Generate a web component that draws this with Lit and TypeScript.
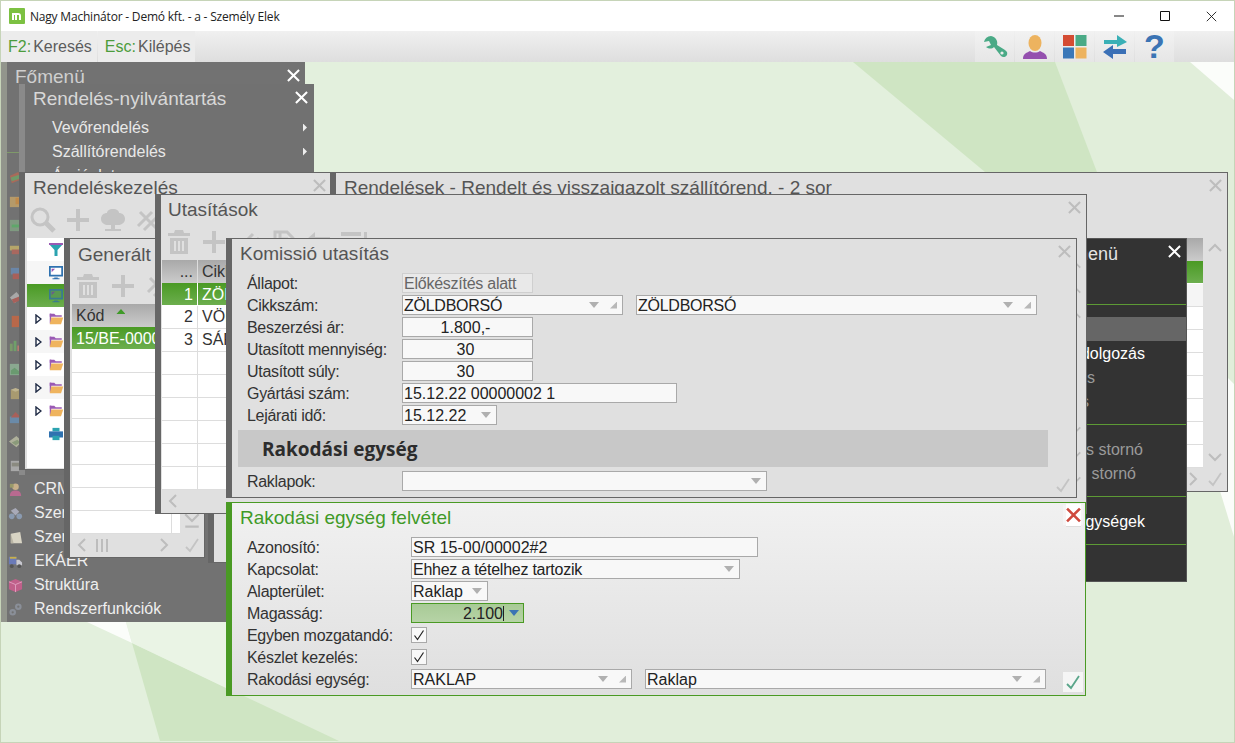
import { LitElement, html, svg, css, nothing } from "lit";
import { customElement } from "lit/decorators.js";

const x = (c = "", s = 13) => html`<svg class="x ${c}" width=${s} height=${s} viewBox="0 0 14 14"><path d="M1 1L13 13M13 1L1 13"/></svg>`;
const g = "#c4c4c4";
const trash = html`<svg width="26" height="26" viewBox="0 0 26 26" fill=${g}><path d="M9 1h8l1 3h6v3H2V4h6z"/><path fill-rule="evenodd" d="M4 9h18v16H4zM8 12v10h2V12zM12 12v10h2V12zM16 12v10h2V12z"/></svg>`;
const plus = html`<svg width="24" height="24" viewBox="0 0 24 24" fill=${g}><path d="M10 1h4v9h9v4h-9v9h-4v-9H1v-4h9z"/></svg>`;
const mag = html`<svg width="26" height="26" viewBox="0 0 26 26" fill="none" stroke=${g}><circle cx="10" cy="10" r="8" stroke-width="3"/><path d="M16 16l8 8" stroke-width="5"/></svg>`;
const tree = html`<svg width="26" height="26" viewBox="0 0 26 26" fill=${g}><path d="M13 2c4 0 6 2 6 4 3 0 6 2 6 6s-4 6-7 6h-3v4h6v2H5v-2h6v-4H8c-3 0-7-2-7-6s3-6 6-6c0-2 2-4 6-4z"/></svg>`;
const slash = html`<svg width="26" height="26" viewBox="0 0 26 26" fill="none" stroke=${g} stroke-width="3"><path d="M3 19L17 5M9 23L23 9M5 5l16 16" /></svg>`;
const dbl = html`<svg width="26" height="26" viewBox="0 0 26 26" fill="none" stroke=${g} stroke-width="3"><path d="M3 19L17 5M9 23L23 9"/></svg>`;
const doc = html`<svg width="26" height="26" viewBox="0 0 26 26" fill="none" stroke=${g} stroke-width="3"><path d="M4 3h12l6 6v14H4zM9 3v7h8"/></svg>`;
const back = html`<svg width="26" height="26" viewBox="0 0 26 26" fill=${g}><path d="M9 3v5h15v4H9v5L1 10z"/></svg>`;
const lines = html`<svg width="28" height="26" viewBox="0 0 28 26" fill=${g}><path d="M1 3h20v4H1zM1 10h20v4H1zM24 3h3v11h-3z"/></svg>`;

const chev = (d: string, s = 16) => {
  const p: Record<string, string> = { u: "M2 11L8 5L14 11", d: "M2 5L8 11L14 5", l: "M11 2L5 8L11 14", r: "M5 2L11 8L5 14", e: "M2 2L8 8L14 2M2 13H14" };
  return html`<svg width=${s} height=${s} viewBox="0 0 16 16" fill="none" stroke="#bdbdbd" stroke-width="2"><path d=${p[d]}/></svg>`;
};
const okc = (c = "#c4c4c4") => html`<svg width="16" height="16" viewBox="0 0 16 16" fill="none" stroke=${c} stroke-width="1.8"><path d="M2 10L6 14L14 2"/></svg>`;

const menuIcons = [
  svg`<path d="M2 6l9-4 3 8-10 4z" fill="#a86a5a"/><path d="M3 8l9-3 1 4-9 3z" fill="#6f9a6a"/>`,
  svg`<path d="M2 3h10v11H2z" fill="#b59a6a"/><path d="M8 4h6v7H8z" fill="#c08a4a"/>`,
  svg`<path d="M2 2h12v12H2z" fill="#7f9a80"/><path d="M4 7h9v3H4z" fill="#5fa76a"/>`,
  svg`<path d="M2 4h12v5H2z" fill="#b5a66a"/><path d="M4 8h10v5H4z" fill="#a8685f"/>`,
  svg`<path d="M3 2h9v7H3z" fill="#6a86a8"/><path d="M5 8h9v6H5z" fill="#a8605a"/>`,
  svg`<path d="M2 8l7-6 5 6-7 6z" fill="#a8a8a8"/><path d="M4 10l8-3 1 4-7 3z" fill="#a8605a"/>`,
  svg`<path d="M4 2h8v12H4z" fill="#b8684a"/>`,
  svg`<path d="M2 6h3v8H2z" fill="#7a9a6a"/><path d="M6 3h3v11H6z" fill="#6fa06a"/><path d="M10 8h3v6h-3z" fill="#b87a70"/>`,
  svg`<path d="M2 2h12v12H2z" fill="#8aa890"/><path d="M3 9l4-3 6 5v2H3z" fill="#6a9a70"/>`,
  svg`<path d="M3 4h10v10H3z" fill="#a89a70"/><path d="M3 4l5-2 5 2-5 2z" fill="#bfb48f"/>`,
  svg`<path d="M2 7h12v7H2z" fill="#6a8aa8"/><path d="M3 8l5-6 6 6z" fill="#a8605a"/>`,
  svg`<path d="M1 8l8-6 6 6-6 6z" fill="#aeb09a"/><path d="M4 9l6-3 3 3-5 3z" fill="#8a9a7a"/>`,
  svg`<path d="M3 3h10v11H3z" fill="#a8a8a8"/><path d="M4 5h8v4H4z" fill="#8a8a80"/>`,
  svg`<circle cx="8" cy="5" r="3.5" fill="#c8b08a"/><path d="M2 15c0-5 3-6 6-6s6 1 6 6z" fill="#b86a90"/><path d="M2 2h4v4H2z" fill="#9a9a6a"/>`,
  svg`<circle cx="4" cy="11" r="3" fill="#8a9ab0"/><circle cx="12" cy="11" r="3" fill="#8a9ab0"/><path d="M3 5l5-3 4 4-4 4z" fill="#a8aab8"/>`,
  svg`<path d="M3 4l10-2 2 12H3z" fill="#d8d4c4"/><path d="M3 4l3 10H3z" fill="#b8b4a4"/>`,
  svg`<path d="M1 3h8v8H1z" fill="#6a7ab8"/><path d="M9 6h3l3 3v3H9z" fill="#c8c8d0"/><circle cx="4" cy="13" r="2" fill="#555"/><circle cx="12" cy="13" r="2" fill="#555"/><path d="M2 3h7v2H2z" fill="#c8b04a"/>`,
  svg`<path d="M8 1l7 3v8l-7 3-7-3V4z" fill="#c0608a"/><path d="M8 7v8M1 4l7 3 7-3" stroke="#e0a0c0" fill="none"/>`,
  svg`<circle cx="5" cy="11" r="3.5" fill="#8a8f98"/><circle cx="11" cy="5" r="3.5" fill="#8a8f98"/><circle cx="5" cy="11" r="1.2" fill="#727272"/><circle cx="11" cy="5" r="1.2" fill="#727272"/>`,
];
const menuLabels = ["", "", "", "", "", "", "", "", "", "", "", "", "", "CRM", "Szerviz", "Szerződés", "EKÁER", "Struktúra", "Rendszerfunkciók"];

const inp = (t: string, cls = "", arrow = false, corner = false) => html`<div class="inp ${cls}"><span class="v">${t}</span>${arrow ? html`<i class="arr ${corner ? "mr" : ""}"></i>` : nothing}${corner ? html`<i class="cor"></i>` : nothing}</div>`;
const row = (l: string, c: unknown) => html`<div class="row"><span class="lbl">${l}</span>${c}</div>`;
const cb = html`<div class="cb"><svg width="12" height="12" viewBox="0 0 12 12" fill="none" stroke="#222" stroke-width="1.2"><path d="M1.5 6.5L4.5 10.5L10.5 1.5"/></svg></div>`;

@customElement("app-root")
export class AppRoot extends LitElement {
  static styles = css`
    :host { display: block; width: 1235px; height: 743px; font-family: "Liberation Sans", Arial, sans-serif; }
    .app { width: 1235px; height: 743px; box-sizing: border-box; border: 1px solid #c6d4b8; display: flex; flex-direction: column; background: #fff; overflow: hidden; }
    .tb { height: 30px; display: flex; align-items: center; padding-left: 8px; font: 12px "Open Sans", sans-serif; color: #222; flex: none; }
    .tb .t { margin-left: 5px; letter-spacing: -0.2px; }
    .wc { margin-left: auto; display: flex; }
    .wc div { width: 46px; height: 30px; display: flex; align-items: center; justify-content: center; }
    .bar { height: 31px; flex: none; display: flex; background: linear-gradient(#f0f0f0, #dedede); font-size: 16px; color: #5c5c5c; }
    .tab { display: flex; align-items: center; padding: 0 5px 0 7px; background: #ececec; }
    .tab + .tab { margin-left: 1px; }
    .tab b { font-weight: 400; color: #4c9c3c; margin-right: 2px; }
    .ibs { margin-left: auto; margin-right: 60px; display: flex; }
    .ib { width: 39px; margin-left: 1px; background: linear-gradient(#f2f2f2, #e6e6e6); display: flex; align-items: center; justify-content: center; }
    .q { font: 700 34px "Liberation Sans", sans-serif; color: #3b74b4; line-height: 31px; }
    .desk { flex: 1; position: relative; overflow: hidden; background: #e3f0dd; }
    .bg { position: absolute; inset: 0; width: 100%; height: 100%; }

    .win { position: absolute; box-sizing: border-box; display: flex; flex-direction: column; background: #e0e0e0; border: 1px solid #666; border-left-width: 6px; overflow: hidden; color: #333; }
    .title { height: 31px; flex: none; font-size: 19px; line-height: 29px; padding-left: 8px; color: #555; white-space: nowrap; }
    .cl { position: absolute; top: 2px; right: 2px; width: 20px; height: 20px; display: flex; align-items: center; justify-content: center; }
    .x { fill: none; stroke: #bdbdbd; stroke-width: 2.2; }
    .x.w { stroke: #fff; stroke-width: 2.2; }
    .x.r { stroke: #cf4a3e; stroke-width: 2.4; }
    .x.k { stroke: #111; stroke-width: 1.1; }
    .tools { height: 34px; flex: none; display: flex; align-items: center; padding-bottom: 3px; box-sizing: border-box; }
    .tools > div { width: 35px; flex: none; display: flex; justify-content: center; }

    .fo { left: 0; top: 0; width: 304px; height: 560px; background: #727272; border: 0; border-left: 6px solid #92958c; }
    .fo .title, .ny .title { color: #cfcfcf; }
    .fo .sp { height: 72px; flex: none; position: relative; }
    .fo .sp i { position: absolute; left: 0; width: 14px; top: 59px; height: 1px; background: #7f9a6a; }
    .fo .it { height: 24px; flex: none; display: flex; align-items: center; color: #eee; font-size: 16px; white-space: nowrap; }
    .fo .it svg { margin: 0 11px 0 1px; flex: none; }
    .ny { left: 18px; top: 22px; width: 295px; height: 391px; background: #717171; border: 0; border-left: 6px solid #8a8a8a; }
    .ny .title { height: 31px; color: #d8d8d8; }
    .ny .it { height: 24px; flex: none; display: flex; align-items: center; padding: 1px 0 0 27px; box-sizing: border-box; color: #e8e8e8; font-size: 16px; }
    .ny .it i { margin-left: auto; margin-right: 7px; width: 4px; height: 8px; background: #eee; clip-path: polygon(0 0, 100% 50%, 0 100%); }
    .ny .cl { top: 3px; right: 3px; }
    .fo .cl { top: 3px; right: 2px; }

    .kez { left: 18px; top: 110px; width: 313px; height: 298px; }
    .tree { margin-left: 2px; background: #fff; height: 230px; flex: none; }
    .tr { height: 23px; display: flex; align-items: center; box-sizing: border-box; position: relative; }
    .tr.z { background: #f6f6f6; }
    .tr.g { background: linear-gradient(#4a9a24, #6cae4e); }
    .tr .a { width: 13px; flex: none; display: flex; justify-content: flex-end; margin-left: 2px; }
    .tr .ic { width: 22px; display: flex; justify-content: flex-start; margin-left: 22px; flex: none; }
    .tr .a + .ic { margin-left: 7px; }

    .ren { left: 329px; top: 110px; width: 898px; height: 320px; }
    .body { display: flex; height: 229px; flex: none; }
    .rt { flex: 1; min-width: 0; }
    .rcol { width: 24px; flex: none; display: flex; flex-direction: column; justify-content: space-between; align-items: center; padding: 2px 0; box-sizing: border-box; }
    .hd { height: 23px; background: linear-gradient(#a9a9a9, #cbcbcb); box-sizing: border-box; }
    .grn { height: 23px; background: linear-gradient(#4a9a24, #6cae4e); border-bottom: 1px solid #fff; box-sizing: border-box; }
    .r { height: 23px; background: #fff; border-bottom: 1px solid #ddd; box-sizing: border-box; }
    .r.z { background: #f5f5f5; }
    .foot { flex: 1; display: flex; justify-content: flex-end; align-items: center; gap: 6px; padding-right: 4px; }

    .w208 { left: 207px; top: 300px; width: 500px; height: 201px; }

    .gen { left: 63px; top: 176px; width: 141px; height: 320px; }
    .gen .title { line-height: 31px; }
    .gb { display: flex; height: 229px; flex: none; padding-left: 2px; }
    .gt { flex: 1; min-width: 0; font-size: 16px; background: #fff; }
    .gt .hd, .ut .hd { display: flex; align-items: center; }
    .gt .hd { padding-left: 4px; font-size: 16px; color: #333; gap: 12px; }
    .gt .hd i { width: 9px; height: 5px; background: #3f9a28; clip-path: polygon(50% 0, 100% 100%, 0 100%); margin-top: -8px; }
    .gt .grn { color: #fff; padding-left: 4px; line-height: 23px; white-space: nowrap; overflow: hidden; }
    .gt .r { background: linear-gradient(90deg, #fff 99px, #ddd 99px, #ddd 100px, #fff 100px); }
    .gr { width: 24px; flex: none; display: flex; flex-direction: column; justify-content: flex-end; align-items: center; padding-bottom: 3px; box-sizing: border-box; }
    .gf { flex: 1; display: flex; align-items: center; padding-left: 4px; }
    .gf .m { margin-left: 6px; width: 16px; height: 13px; border-left: 2px solid #bdbdbd; box-sizing: border-box; background: linear-gradient(90deg, transparent 3px, #bdbdbd 3px, #bdbdbd 5px, transparent 5px, transparent 8px, #bdbdbd 8px, #bdbdbd 10px, transparent 10px); }
    .gf .rr { margin-left: auto; margin-right: 12px; display: flex; }
    .gf .ck { margin-right: 4px; display: flex; }

    .dark { left: 699px; top: 176px; width: 487px; height: 344px; background: #333; border: 1px solid #555; color: #fff; }
    .dark .dt { height: 65px; flex: none; font-size: 18px; line-height: 30px; text-align: right; color: #e4e4e4; padding-right: 68px; box-sizing: border-box; }
    .dark hr { flex: none; border: 0; margin: 0; height: 1px; background: #5d9a35; }
    .dark .sec { padding: 12px 0 11px; flex: none; }
    .dark .di { height: 24px; font-size: 16px; line-height: 25px; text-align: right; color: #fff; white-space: nowrap; padding-right: 41px; box-sizing: border-box; }
    .dark .di.off { color: #9a9a9a; }
    .dark .di.sel { background: #666; }
    .dark .di.p91 { padding-right: 91px; }
    .dark .di.p97 { padding-right: 97px; }
    .dark .di.p43 { padding-right: 43px; }
    .dark .di.p50 { padding-right: 50px; }

    .uta { left: 154px; top: 132px; width: 932px; height: 320px; }
    .uta .title { padding-left: 7px; }
    .ub { display: flex; height: 229px; flex: none; padding-left: 1px; }
    .ut { flex: 1; min-width: 0; font-size: 16px; background: #fff; }
    .ut .line { display: flex; }
    .ut .n { width: 36px; flex: none; box-sizing: border-box; text-align: right; padding-right: 4px; line-height: 24px; border-right: 1px solid #ddd; margin-right: 1px; height: 100%; }
    .ut .c { padding-left: 3px; line-height: 24px; white-space: nowrap; }
    .ut .r .n, .ut .r .c { line-height: 22px; }
    .ut .grn { color: #fff; }
    .ut .grn .n { border-color: #fff; }
    .uc { width: 10px; flex: none; }
    .urc { position: absolute; right: 1px; top: 63px; bottom: 26px; display: flex; flex-direction: column; gap: 11px; width: 20px; align-items: center; }
    .urc .s { flex: 1; }

    .kom { left: 225px; top: 176px; width: 851px; height: 260px; }
    .kom .title { height: 34px; }
    .form { padding-left: 15px; flex: none; }
    .row { display: flex; align-items: center; height: 20px; margin-bottom: 2px; font-size: 16px; white-space: nowrap; }
    .lbl { width: 155px; flex: none; letter-spacing: -0.3px; padding-top: 2px; line-height: 18px; }
    .gw .lbl { width: 164px; }
    .inp { height: 20px; box-sizing: border-box; border: 1px solid #a9a9a9; background: #f8f8f8; display: flex; align-items: center; padding: 0 5px 0 1px; color: #222; flex: none; }
    .inp .v { flex: 1; white-space: nowrap; overflow: hidden; padding-top: 2px; line-height: 16px; }
    .inp i { flex: none; }
    .tight .v { letter-spacing: -0.25px; }
    .arr { width: 10px; height: 6px; background: #b0b0b0; clip-path: polygon(0 0, 100% 0, 50% 100%); }
    .arr.mr { margin-right: 11px; }
    .cor { width: 7px; height: 7px; background: #b8b8b8; clip-path: polygon(100% 0, 100% 100%, 0 100%); }
    .w131 { width: 131px; }
    .ro { background: #e9e9e9; border-color: #cfcfcf; color: #666; }
    .ctr .v { text-align: center; }
    .w275 { width: 275px; }
    .w95 { width: 95px; }
    .w365 { width: 365px; }
    .sect { margin: 3px 0 4px 6px; width: 810px; height: 37px; flex: none; background: #c8c8c8; font: 700 19px "Open Sans", sans-serif; color: #2c2c2c; line-height: 39px; padding-left: 24px; box-sizing: border-box; }
    .kck { position: absolute; right: 5px; bottom: 4px; display: flex; }

    .gw { left: 225px; top: 440px; width: 860px; height: 194px; border-color: #4a9a24; background: linear-gradient(#f1f1f1, #dfdfdf); }
    .gw .title { height: 34px; color: #3f9a28; }
    .gw .cl { background: #f5f5f5; }
    .okb { position: absolute; right: 2px; bottom: 3px; width: 20px; height: 20px; background: #f5f5f5; display: flex; align-items: center; justify-content: center; }
    .w347 { width: 347px; }
    .w329 { width: 329px; }
    .w77 { width: 77px; }
    .mag { width: 113px; background: linear-gradient(#a8ca96, #b6d3a6); border-color: #4a9a24; padding-right: 4px; }
    .mag .v { text-align: right; }
    .mag .cur { display: inline-block; width: 1px; height: 15px; background: #222; vertical-align: -2px; }
    .mag .arr { background: #3b74b4; margin-left: 5px; }
    .cb { width: 16px; height: 16px; box-sizing: border-box; border: 1px solid #a9a9a9; background: #f8f8f8; display: flex; align-items: center; justify-content: center; }
    .r221 { width: 221px; }
    .r401 { width: 401px; margin-left: 13px; }
  `;

  render() {
    const arrow = html`<svg width="7" height="10" viewBox="0 0 7 10" fill="#fff" stroke="#1f2a44" stroke-width="1.4"><path d="M1 1l5 4-5 4z"/></svg>`;
    const folder = html`<svg width="15" height="13" viewBox="0 0 20 17"><path d="M1 2h6l2 2h8v2H1z" fill="#9a5ab4"/><path d="M1 2h2v13H1z" fill="#9a5ab4"/><path d="M3 7h16l-3 9H1z" fill="#efb45e"/></svg>`;
    const treeRow = (ic: unknown, a = false, z = "") => html`<div class="tr ${z}">${a ? html`<span class="a">${arrow}</span>` : nothing}<span class="ic">${ic}</span></div>`;
    const filt = html`<svg width="14" height="14" viewBox="0 0 14 14"><path d="M0 1h14L8.5 7v6h-3V7z" fill="#2ba3b0"/><path d="M0 0h14v2H0z" fill="#9a5ab4"/></svg>`;
    const mon = html`<svg width="14" height="14" viewBox="0 0 16 16"><path d="M1 1h14v10H1z" fill="#fff" stroke="#2f72b0" stroke-width="2"/><path d="M3 3h4L3 7z" fill="#9a5ab4"/><path d="M6 13h4v1h2v1H4v-1h2z" fill="#2f72b0"/></svg>`;
    const mon2 = html`<svg width="14" height="14" viewBox="0 0 16 16"><path d="M1 1h14v10H1z" fill="#5a9a50" stroke="#3a7a90" stroke-width="2"/><path d="M3 3h4L3 7z" fill="#6a5a90"/><path d="M6 13h4v1h2v1H4v-1h2z" fill="#3a7a90"/></svg>`;
    const print = html`<svg width="14" height="14" viewBox="0 0 16 16"><path d="M4 1h8v4H4z" fill="#2ba3b0"/><path d="M0 5h16v7H0z" fill="#2f72b0"/><path d="M4 10h8v5H4z" fill="#2ba3b0"/></svg>`;
    return html`
      <div class="app">
        <div class="tb">
          <svg width="16" height="16" viewBox="0 0 16 16"><rect width="16" height="16" rx="1" fill="#7cc142"/><path d="M3 12V5h6a3 3 0 0 1 3 3v4h-2V7H8v5H6V7H5v5z" fill="#fff"/></svg>
          <span class="t">Nagy Machinátor - Demó kft. - a - Személy Elek</span>
          <div class="wc">
            <div><svg width="12" height="12" viewBox="0 0 12 12"><path d="M1 6h10" stroke="#111"/></svg></div>
            <div><svg width="12" height="12" viewBox="0 0 12 12"><path d="M1.5 1.5h9v9h-9z" stroke="#111" fill="none"/></svg></div>
            <div>${x("k", 11)}</div>
          </div>
        </div>
        <div class="bar">
          <div class="tab"><b>F2:</b>Keresés</div>
          <div class="tab"><b>Esc:</b>Kilépés</div>
          <div class="ibs">
            <div class="ib"><svg width="26" height="26" viewBox="0 0 26 26"><path d="M9 2a7 7 0 0 0-7 6l5-1 2 4-5 2c3 2 6 2 8 0l7 9c2 2 5 1 6-1 1-3-1-4-2-5l-8-5c1-4-1-8-6-9z" fill="#4aaa86"/><circle cx="20" cy="19" r="1.6" fill="#ececec"/></svg></div>
            <div class="ib"><svg width="26" height="26" viewBox="0 0 26 26"><path d="M1 25c0-5 3-6 7-8 3 2 7 2 10 0 4 2 7 3 7 8z" fill="#9450ae"/><ellipse cx="13" cy="9" rx="6.5" ry="8" fill="#edb35f"/></svg></div>
            <div class="ib"><svg width="24" height="24" viewBox="0 0 24 24"><rect width="11" height="11" fill="#d44c33"/><rect x="12.5" width="11" height="11" fill="#4aaa86"/><rect y="12.5" width="11" height="11" fill="#3b78b8"/><rect x="12.5" y="12.5" width="11" height="11" fill="#edb35f"/></svg></div>
            <div class="ib"><svg width="26" height="26" viewBox="0 0 26 26"><path d="M2 6h13V1l10 7-10 5V10H2z" fill="#3ab0b6"/><path d="M24 15H11v-4L1 18l10 7v-5h13z" fill="#3b70b6"/></svg></div>
            <div class="ib"><span class="q">?</span></div>
          </div>
        </div>
        <div class="desk">
          <svg class="bg" viewBox="1 62 1233 680" preserveAspectRatio="none">
            <path d="M1055 62H1234V743H339L132 643V622H304V172H1097z" fill="#e1eeda"/>
            <path d="M853 62H1055L1097 172H985z" fill="#cfe5c3"/>
            <path d="M132 643L339 741H160z" fill="#cfe5c3"/>
            <path d="M87 622H126L132 643z" fill="#fbfdfa"/>
            <path d="M126 622H226V688L132 643z" fill="#eaf4e5"/>
            <path d="M1190 62H1234V100z" fill="#fbfdfa"/>
            <path d="M1228 378L1235 385V540L1220 491H1228z" fill="#fbfdfa"/>
          </svg>

          <div class="win fo">
            <div class="title">Főmenü</div><div class="cl">${x("w")}</div>
            <div class="sp"><i></i></div>
            ${menuIcons.map((ic, i) => html`<div class="it"><svg width="15" height="15" viewBox="0 0 16 16">${ic}</svg>${menuLabels[i] ?? ""}</div>`)}
          </div>

          <div class="win ny">
            <div class="title">Rendelés-nyilvántartás</div><div class="cl">${x("w")}</div>
            ${["Vevőrendelés", "Szállítórendelés", "Árajánlat"].map((t) => html`<div class="it">${t}<i></i></div>`)}
          </div>

          <div class="win kez">
            <div class="title">Rendeléskezelés</div><div class="cl">${x()}</div>
            <div class="tools"><div>${mag}</div><div>${plus}</div><div>${tree}</div><div>${slash}</div></div>
            <div class="tree">
              ${treeRow(filt)}${treeRow(mon, false, "z")}${treeRow(mon2, false, "g")}
              ${treeRow(folder, true)}${treeRow(folder, true, "z")}${treeRow(folder, true)}${treeRow(folder, true, "z")}${treeRow(folder, true)}${treeRow(print)}
            </div>
          </div>

          <div class="win ren">
            <div class="title">Rendelések - Rendelt és visszaigazolt szállítórend. - 2 sor</div><div class="cl">${x()}</div>
            <div class="tools"></div>
            <div class="body">
              <div class="rt"><div class="hd"></div><div class="grn"></div><div class="r z"></div>${[1, 2, 3, 4, 5, 6, 7].map(() => html`<div class="r"></div>`)}</div>
              <div class="rcol">${chev("u")}${chev("d")}</div>
            </div>
            <div class="foot">${chev("r")}${okc()}</div>
          </div>

          <div class="win w208"></div>

          <div class="win gen">
            <div class="title">Generált rakodási egység</div>
            <div class="tools"><div>${trash}</div><div>${plus}</div><div>${slash}</div></div>
            <div class="gb">
              <div class="gt">
                <div class="hd">Kód<i></i></div>
                <div class="grn">15/BE-00002</div>
                ${[1, 2, 3, 4, 5, 6, 7, 8].map(() => html`<div class="r"></div>`)}
              </div>
              <div class="gr">${chev("e", 18)}</div>
            </div>
            <div class="gf">${chev("l")}<span class="m"></span><span class="rr">${chev("r")}</span><span class="ck">${okc()}</span></div>
          </div>

          <div class="win dark">
            <div class="dt">Komissió menü</div><div class="cl">${x("w")}</div>
            <hr />
            <div class="sec">
              <div class="di sel"></div>
              <div class="di">Kiszedés feldolgozás</div>
              <div class="di off p91">Kiszedés</div>
              <div class="di off p97">Kiadás</div>
            </div>
            <hr />
            <div class="sec">
              <div class="di off p43">Kiszedés stornó</div>
              <div class="di off p50">Kiadás stornó</div>
            </div>
            <hr />
            <div class="sec"><div class="di">Rakodási egységek</div></div>
            <hr />
          </div>

          <div class="win uta">
            <div class="title">Utasítások</div><div class="cl">${x()}</div>
            <div class="tools"><div>${trash}</div><div>${plus}</div><div>${dbl}</div><div>${doc}</div><div>${back}</div><div>${lines}</div></div>
            <div class="ub">
              <div class="ut">
                <div class="hd line"><span class="n">...</span><span class="c">Cikkszám</span></div>
                <div class="grn line"><span class="n">1</span><span class="c">ZÖLDBORSÓ</span></div>
                <div class="r line"><span class="n">2</span><span class="c">VÖRÖSHAGYMA</span></div>
                <div class="r line"><span class="n">3</span><span class="c">SÁRGARÉPA</span></div>
                ${[1, 2, 3, 4, 5, 6].map(() => html`<div class="r line"><span class="n"></span></div>`)}
              </div>
              <div class="uc"></div>
            </div>
            <div class="gf">${chev("l")}</div>
            <div class="urc">${chev("u", 14)}${chev("u", 14)}${chev("u", 14)}<span class="s"></span>${chev("d", 14)}${chev("d", 14)}${chev("d", 14)}</div>
          </div>

          <div class="win kom">
            <div class="title">Komissió utasítás</div><div class="cl">${x()}</div>
            <div class="form">
              ${row("Állapot:", inp("Előkészítés alatt", "w131 ro tight"))}
              ${row("Cikkszám:", html`${inp("ZÖLDBORSÓ", "r221 tight", true, true)}${inp("ZÖLDBORSÓ", "r401 tight", true, true)}`)}
              ${row("Beszerzési ár:", inp("1.800,-", "w131 ctr"))}
              ${row("Utasított mennyiség:", inp("30", "w131 ctr"))}
              ${row("Utasított súly:", inp("30", "w131 ctr"))}
              ${row("Gyártási szám:", inp("15.12.22 00000002 1", "w275"))}
              ${row("Lejárati idő:", inp("15.12.22", "w95", true))}
            </div>
            <div class="sect">Rakodási egység</div>
            <div class="form">${row("Raklapok:", inp("", "w365", true))}</div>
            <div class="kck">${okc()}</div>
          </div>

          <div class="win gw">
            <div class="title">Rakodási egység felvétel</div><div class="cl">${x("r", 15)}</div>
            <div class="form">
              ${row("Azonosító:", inp("SR 15-00/00002#2", "w347"))}
              ${row("Kapcsolat:", inp("Ehhez a tételhez tartozik", "w329 tight", true))}
              ${row("Alapterület:", inp("Raklap", "w77", true))}
              ${row("Magasság:", html`<div class="inp mag"><span class="v">2.100<span class="cur"></span></span><i class="arr"></i></div>`)}
              ${row("Egyben mozgatandó:", cb)}
              ${row("Készlet kezelés:", cb)}
              ${row("Rakodási egység:", html`${inp("RAKLAP", "r221", true, true)}${inp("Raklap", "r401", true, true)}`)}
            </div>
            <div class="okb">${okc("#5aa58a")}</div>
          </div>
        </div>
      </div>
    `;
  }
}
